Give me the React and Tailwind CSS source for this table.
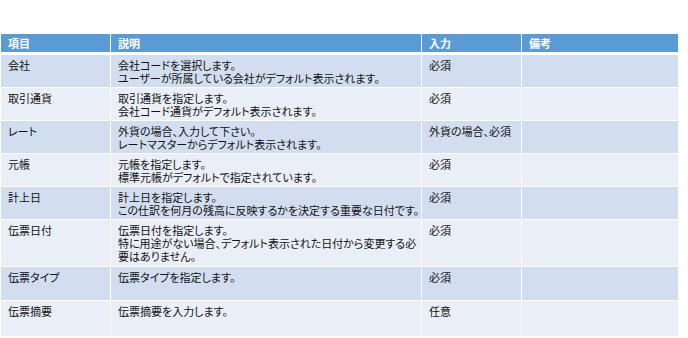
import React from 'react';

const rows = [
  { item: '会社', desc: ['会社コードを選択します。', 'ユーザーが所属している会社がデフォルト表示されます。'], input: '必須', h: 'h-[32px]' },
  { item: '取引通貨', desc: ['取引通貨を指定します。', '会社コード通貨がデフォルト表示されます。'], input: '必須', h: 'h-[32px]' },
  { item: 'レート', desc: ['外貨の場合、入力して下さい。', 'レートマスターからデフォルト表示されます。'], input: '外貨の場合、必須', h: 'h-[32px]' },
  { item: '元帳', desc: ['元帳を指定します。', '標準元帳がデフォルトで指定されています。'], input: '必須', h: 'h-[32px]' },
  { item: '計上日', desc: ['計上日を指定します。', 'この仕訳を何月の残高に反映するかを決定する重要な日付です。'], input: '必須', h: 'h-[32px]' },
  { item: '伝票日付', desc: ['伝票日付を指定します。', '特に用途がない場合、デフォルト表示された日付から変更する必', '要はありません。'], input: '必須', h: 'h-[46px]' },
  { item: '伝票タイプ', desc: ['伝票タイプを指定します。'], input: '必須', h: 'h-[33px]' },
  { item: '伝票摘要', desc: ['伝票摘要を入力します。'], input: '任意', h: 'h-[35px]' },
];

const cols = 'grid grid-cols-[109px_310px_99px_156px] gap-x-px';

export default function App() {
  return (
    <div className="w-[688px] h-[338px] bg-white overflow-hidden pt-[34px] pl-px font-['Noto_Sans_CJK_JP',sans-serif] text-[11px] leading-[13px] text-[#111] [font-feature-settings:'palt']">
      <div className="w-[677px] flex flex-col">
        <div className={`${cols} h-[18px] mb-[3px]`}>
          {['項目', '説明', '入力', '備考'].map((t) => (
            <div key={t} className="bg-[#5b9bd5] text-white font-bold px-[7px] flex items-center">
              {t}
            </div>
          ))}
        </div>
        <div className="flex flex-col gap-y-px">
          {rows.map((r, i) => {
            const bg = i % 2 === 0 ? 'bg-[#d2deef]' : 'bg-[#eaeff7]';
            return (
              <div key={r.item} className={`${cols} ${r.h}`}>
                <div className={`${bg} px-[7px] pt-[4px]`}>{r.item}</div>
                <div className={`${bg} px-[7px] pt-[4px] whitespace-nowrap`}>
                  {r.desc.map((d) => (
                    <div key={d}>{d}</div>
                  ))}
                </div>
                <div className={`${bg} px-[7px] pt-[4px] whitespace-nowrap`}>{r.input}</div>
                <div className={bg} />
              </div>
            );
          })}
        </div>
      </div>
    </div>
  );
}
